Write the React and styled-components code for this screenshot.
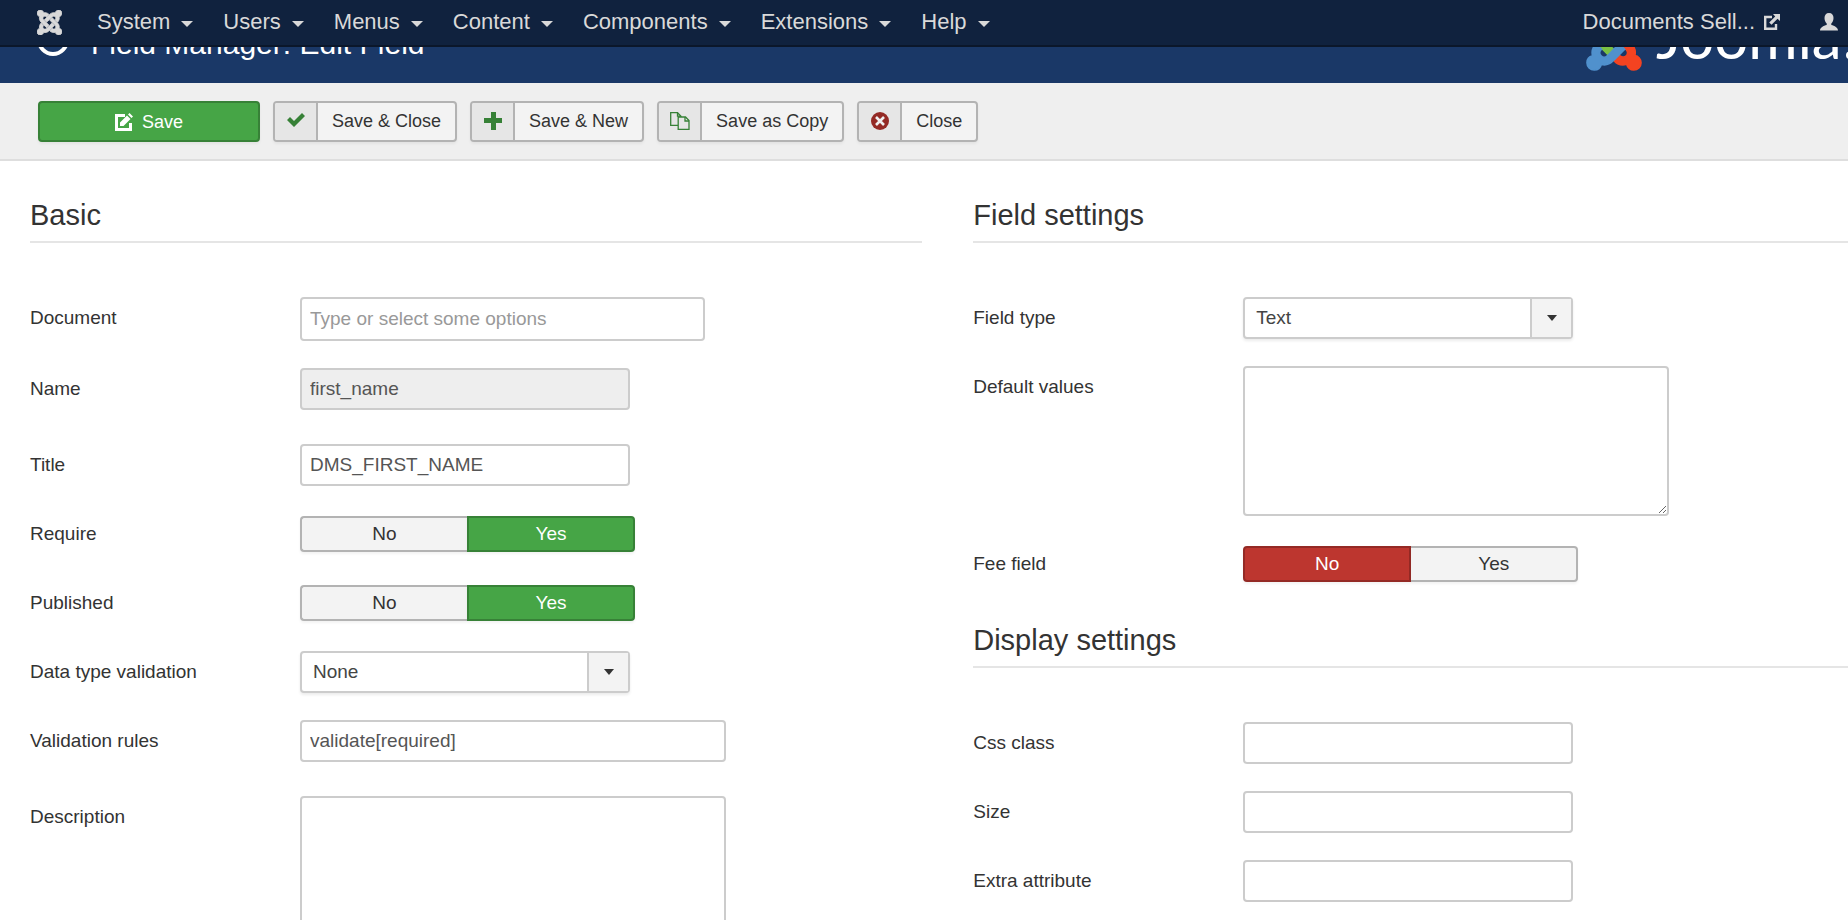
import styled, { createGlobalStyle } from 'styled-components'

const GlobalStyle = createGlobalStyle`
* {
  box-sizing: border-box;
}

body {
  margin: 0;
  overflow: hidden;
  background-color: #fff;
  color: #333;
  font-family: "Liberation Sans", Arial, sans-serif;
  font-size: 19px;
  line-height: 28px;
}

button, input, select, textarea {
  font: inherit;
}
`;

const menus = ['System', 'Users', 'Menus', 'Content', 'Components', 'Extensions', 'Help']

// top left, top right, bottom right, bottom left
const ARMS = [
  'M.6 92.1C.6 58.8 27.4 32 60.4 32c30 0 54.500 21.900 59.200 50.200 32.600-7.600 67.100.6 96.500 30l-44.300 44.300c-20.500-20.500-42.600-16.300-55.400-3.500-14.300 14.300-14.300 37.900 0 52.200l99.500 99.500-44 44.300c-87.700-87.200-49.700-49.700-99.800-99.700-26.800-26.500-35-64.800-24.800-98.900C20.400 144.600.6 120.700.6 92.100z',
  'M130.100 208.500l44.300 44.300c10-10 89.700-89.700 99.700-99.800 14.300-14.300 37.600-14.300 51.900 0 12.800 12.800 17 35-3.500 55.400l44 44.300c31.200-31.200 38.500-67.600 28.900-101.200 29.200-4.100 51.900-29.200 51.900-59.500 0-33.200-26.800-60.100-59.800-60.100-30.300 0-55.400 22.500-59.500 51.600-33.800-9.900-71.700-1.500-98.300 25.100-18.300 19.100-71.100 71.500-99.600 99.900z',
  'M396.400 360.700c8.200-32.700-.9-68.500-26.300-93.900-11.800-12.200 5 4.700-99.500-99.700l-44.300 44.300 99.700 99.700c14.300 14.300 14.300 37.600 0 51.900-12.800 12.800-35 17-55.400-3.500l-44 44.300c27.600 30.200 68 38.800 102.700 28 5.500 27.400 29.700 48.100 58.900 48.100 33 0 59.800-26.800 59.800-60.100 0-30.200-22.500-55-51.600-59.100z',
  'M312.100 307.600l-44-44.300c-87 86.400-50.400 50.400-99.700 99.800-14.300 14.300-37.600 14.300-51.900 0-13.100-13.400-16.900-35.300 3.200-55.400l-44-44.300c-30.200 30.200-38 65.200-29.500 98.300-26.700 6-46.200 29.900-46.200 58.200C0 453.200 26.800 480 59.800 480c28.600 0 52.500-19.800 58.600-46.700 32.700 8.200 68.500-.6 94.200-26 32.100-32 12.200-12.400 99.500-99.700z',
]

function JoomlaMark({ size, colors }) {
  return (
    <svg width={size} height={size} viewBox="0 32 448 448" aria-hidden="true">
      {ARMS.map((arm, i) => <path key={i} d={arm} fill={colors[i]} stroke={colors[i]} strokeWidth="14" />)}
    </svg>
  )
}

function EditIcon() {
  return (
    <svg width="18" height="18" viewBox="0 0 18 18" aria-hidden="true">
      <path d="M10 2.500H1.500V16.500H15.500V10" fill="none" stroke="#fff" strokeWidth="3" />
      <path d="M5 13V9.500L12 2.500L15.500 6L8.500 13Z M13 1.500L14.500 0L18 3.500L16.500 5Z" fill="#fff" />
    </svg>
  )
}

function CheckIcon() {
  return (
    <svg width="18" height="18" viewBox="0 0 18 18" aria-hidden="true">
      <path d="M0 8L3 5L7 9L15 1L18 4L7 15Z" fill="#378137" />
    </svg>
  )
}

function PlusIcon() {
  return (
    <svg width="18" height="18" viewBox="0 0 18 18" aria-hidden="true">
      <path d="M7 0H12V6H18V11H12V18H7V11H0V6H7Z" fill="#378137" />
    </svg>
  )
}

function CopyIcon() {
  return (
    <svg width="20" height="18" viewBox="0 0 20 18" aria-hidden="true">
      <g fill="none" stroke="#378137" strokeWidth="1.300">
        <path d="M8 13.300H0.700V0.700H7.500L11 4.200V5" />
        <path d="M7.500 0.700V4.200H11" />
        <path d="M8.200 5H15.500L19 8.500V17.300H8.200Z" />
        <path d="M15 5V9H19" />
      </g>
    </svg>
  )
}

function CancelIcon() {
  return (
    <svg width="18" height="18" viewBox="0 0 18 18" aria-hidden="true">
      <circle cx="9" cy="9" r="9" fill="#942a25" />
      <path d="M5 5L13 13M13 5L5 13" stroke="#f0f0f0" strokeWidth="2.600" />
    </svg>
  )
}

function ExternalIcon() {
  return (
    <svg width="16" height="16" viewBox="0 0 16 16" aria-hidden="true">
      <path d="M8 3H1.200V14.800H12V10" fill="none" stroke="#d9d9d9" strokeWidth="2.400" />
      <path d="M9 0H16V7L13.500 4.800L7.500 10.800L5.200 8.500L11.200 2.500Z" fill="#d9d9d9" />
    </svg>
  )
}

function UserIcon() {
  return (
    <svg width="18" height="18" viewBox="0 0 18 18" aria-hidden="true">
      <path d="M9 0C12 0 13.500 2 13.500 5C13.500 7.500 12.500 9.500 11.300 10.500V12C14.500 12.800 18 14.500 18 17.500H0C0 14.500 3.500 12.800 6.700 12V10.500C5.500 9.500 4.500 7.500 4.500 5C4.500 2 6 0 9 0Z" fill="#d9d9d9" />
    </svg>
  )
}

function Switch({ label, name, value, color, gap }) {
  return (
    <Row as="fieldset" $gap={gap}>
      <Legend>{label}</Legend>
      <SwitchGroup>
        {['No', 'Yes'].map((option) => (
          <SwitchOption key={option} $color={color}>
            <input type="radio" name={name} defaultChecked={option === value} />
            <span>{option}</span>
          </SwitchOption>
        ))}
      </SwitchGroup>
    </Row>
  )
}

function SelectField({ label, id, options }) {
  return (
    <Row>
      <Label htmlFor={id}>{label}</Label>
      <SelectWrap>
        <Select id={id}>
          {options.map((option) => <option key={option}>{option}</option>)}
        </Select>
        <SelectArrow><Caret /></SelectArrow>
      </SelectWrap>
    </Row>
  )
}

function TextField({ label, id, gap, ...rest }) {
  return (
    <Row $gap={gap}>
      <Label htmlFor={id}>{label}</Label>
      <Input id={id} type="text" {...rest} />
    </Row>
  )
}

function App() {
  return (
    <>
      <GlobalStyle />
      <Navbar>
        <Brand href="#" aria-label="Home"><JoomlaMark size={25} colors={['#d9d9d9', '#d9d9d9', '#d9d9d9', '#d9d9d9']} /></Brand>
        <Menu>
          {menus.map((item) => (
            <NavLink href="#" key={item}>{item}<NavCaret /></NavLink>
          ))}
        </Menu>
        <SiteLink href="#">Documents Sell... <ExternalIcon /></SiteLink>
        <NavLink href="#" aria-label="User"><UserIcon /></NavLink>
      </Navbar>

      <Header>
        <TitleIcon width="32" height="32" viewBox="0 0 32 32" aria-hidden="true">
          <circle cx="16" cy="16" r="14" fill="none" stroke="#fff" strokeWidth="4" />
        </TitleIcon>
        <PageTitle>Field Manager: Edit Field</PageTitle>
        <Logo>
          <JoomlaMark size={54} colors={['#7ac143', '#f9a541', '#f44321', '#5091cd']} />
          <LogoText>Joomla!</LogoText>
        </Logo>
      </Header>

      <Toolbar>
        <SaveButton type="button"><EditIcon />Save</SaveButton>
        <ToolButton type="button"><ToolIcon><CheckIcon /></ToolIcon><ToolText>Save &amp; Close</ToolText></ToolButton>
        <ToolButton type="button"><ToolIcon><PlusIcon /></ToolIcon><ToolText>Save &amp; New</ToolText></ToolButton>
        <ToolButton type="button"><ToolIcon><CopyIcon /></ToolIcon><ToolText>Save as Copy</ToolText></ToolButton>
        <ToolButton type="button"><ToolIcon><CancelIcon /></ToolIcon><ToolText>Close</ToolText></ToolButton>
      </Toolbar>

      <Content>
        <Column>
          <Heading>Basic</Heading>
          <TextField label="Document" id="document" placeholder="Type or select some options" $size="medium" />
          <TextField label="Name" id="name" defaultValue="first_name" readOnly gap={34} />
          <TextField label="Title" id="title" defaultValue="DMS_FIRST_NAME" gap={30} />
          <Switch label="Require" name="require" value="Yes" color="green" gap={33} />
          <Switch label="Published" name="published" value="Yes" color="green" gap={30} />
          <SelectField label="Data type validation" id="datatype" options={['None']} />
          <TextField label="Validation rules" id="rules" defaultValue="validate[required]" $size="large" gap={34} />
          <Row>
            <Label htmlFor="description">Description</Label>
            <TextArea id="description" />
          </Row>
        </Column>

        <Column>
          <Heading>Field settings</Heading>
          <SelectField label="Field type" id="fieldtype" options={['Text']} />
          <Row $gap={30}>
            <Label htmlFor="defaults">Default values</Label>
            <TextArea id="defaults" />
          </Row>
          <Switch label="Fee field" name="fee" value="No" color="red" gap={40} />
          <Heading>Display settings</Heading>
          <TextField label="Css class" id="cssclass" />
          <TextField label="Size" id="size" />
          <TextField label="Extra attribute" id="extra" />
        </Column>
      </Content>
    </>
  )
}

export default App

const Navbar = styled.nav`
  position: relative;
  z-index: 1;
  display: flex;
  align-items: center;
  height: 47px;
  padding: 0 10px 1px 37px;
  background-color: #10223e;
  border-bottom: 2px solid #0b172a;
  font-size: 22px;
`;

const Brand = styled.a`
  display: flex;
  margin-right: 35px;
`;

const Menu = styled.div`
  display: flex;
  flex: 1;
  gap: 30px;
`;

const NavLink = styled.a`
  display: flex;
  align-items: center;
  gap: 11px;
  color: #d9d9d9;
  text-decoration: none;
`;

const Caret = styled.span`
  width: 0;
  height: 0;
  border-top: 6px solid #333;
  border-left: 5px solid transparent;
  border-right: 5px solid transparent;
`;

const NavCaret = styled(Caret)`
  margin-top: 4px;
  border-top-color: #d9d9d9;
  border-left-width: 6px;
  border-right-width: 6px;
`;

const SiteLink = styled(NavLink)`
  gap: 9px;
  margin-right: 40px;
`;

const Header = styled.header`
  display: flex;
  align-items: flex-end;
  height: 36px;
  padding-left: 37px;
  overflow: hidden;
  background-color: #1a3867;
  color: #fff;
`;

const TitleIcon = styled.svg`
  margin: 0 22px 27px 0;
`;

const PageTitle = styled.h1`
  flex: 1;
  margin: 0 0 21px;
  font-size: 30px;
  font-weight: 400;
  line-height: 36px;
`;

const Logo = styled.div`
  display: flex;
  align-items: flex-end;
  flex: none;
  width: 261px;
  padding-bottom: 13px;

  svg {
    overflow: visible;
  }
`;

const LogoText = styled.span`
  margin-left: 15px;
  font-family: Lato, sans-serif;
  font-size: 60px;
  line-height: 68px;
`;

const Toolbar = styled.div`
  display: flex;
  gap: 13px;
  padding: 18px 38px 17px;
  background-color: #efefef;
  border-bottom: 2px solid #dedede;
  font-size: 18px;
`;

const SaveButton = styled.button`
  display: flex;
  align-items: center;
  justify-content: center;
  gap: 9px;
  width: 222px;
  height: 41px;
  padding: 0;
  border: 2px solid #378137;
  border-radius: 4px;
  background-color: #46a546;
  box-shadow: 0 2px 3px rgba(0, 0, 0, 0.05);
  color: #fff;
`;

const ToolButton = styled.button`
  display: flex;
  height: 41px;
  padding: 0;
  overflow: hidden;
  border: 2px solid #b3b3b3;
  border-radius: 4px;
  background-color: #f3f3f3;
  box-shadow: 0 2px 3px rgba(0, 0, 0, 0.05);
  color: #333;
`;

const ToolIcon = styled.span`
  display: flex;
  align-items: center;
  justify-content: center;
  width: 43px;
  height: 37px;
  padding-bottom: 2px;
  border-right: 2px solid #b3b3b3;
  background-color: #e6e6e6;
`;

const ToolText = styled.span`
  padding: 0 14px;
  line-height: 37px;
`;

const Content = styled.main`
  display: grid;
  grid-template-columns: 51fr 50fr;
  column-gap: 51px;
  padding: 36px 0 0 30px;
`;

const Column = styled.section`
  min-width: 0;
`;

const Heading = styled.h3`
  margin: 0 0 54px;
  padding-bottom: 8px;
  border-bottom: 2px solid #e5e5e5;
  font-size: 29px;
  font-weight: 400;
  line-height: 36px;
`;

const Row = styled.div`
  display: flex;
  align-items: flex-start;
  min-width: 0;
  margin: 0 0 ${(props) => props.$gap || 27}px;
  padding: 0;
  border: 0;
`;

const Label = styled.label`
  width: 270px;
  flex: none;
  padding-top: 7px;
`;

const Legend = styled.legend`
  float: left;
  width: 270px;
  padding: 4px 0 0;
`;

const widths = { small: '330px', medium: '405px', large: '426px' }

const Input = styled.input`
  width: ${(props) => widths[props.$size || 'small']};
  height: ${(props) => (props.$size === 'medium' ? '44px' : '42px')};
  padding: 0 8px;
  border: 2px solid #ccc;
  border-radius: 4px;
  background-color: #fff;
  color: #555;

  &:read-only {
    background-color: #eee;
  }

  &::placeholder {
    color: #999;
  }
`;

const TextArea = styled.textarea`
  width: 426px;
  height: 150px;
  padding: 6px 8px;
  border: 2px solid #ccc;
  border-radius: 4px;
`;

const SelectWrap = styled.div`
  position: relative;
  width: 330px;
`;

const Select = styled.select`
  display: block;
  width: 100%;
  height: 42px;
  padding: 0 11px;
  appearance: none;
  border: 2px solid #ccc;
  border-radius: 4px;
  background-color: #fff;
  box-shadow: 0 2px 3px rgba(0, 0, 0, 0.08);
  color: #444;
`;

const SelectArrow = styled.span`
  position: absolute;
  top: 2px;
  right: 2px;
  bottom: 2px;
  display: flex;
  align-items: center;
  justify-content: center;
  width: 41px;
  border-left: 2px solid #ccc;
  background-color: #f3f3f3;
  pointer-events: none;
`;

const colors = {
  green: ['#46a546', '#378137'],
  red: ['#bd362f', '#942a25'],
}

const SwitchGroup = styled.div`
  display: flex;
`;

const SwitchOption = styled.label`
  position: relative;
  width: 167px;
  text-align: center;

  &:has(input:checked) {
    width: 168px;
  }

  input {
    position: absolute;
    inset: 0;
    margin: 0;
    opacity: 0;
  }

  span {
    display: block;
    height: 36px;
    border: 2px solid #b3b3b3;
    border-right-width: 0;
    border-radius: 4px 0 0 4px;
    background-color: #f3f3f3;
    box-shadow: 0 2px 3px rgba(0, 0, 0, 0.05);
    line-height: 32px;
  }

  &:last-child span {
    border-right-width: 2px;
    border-left-width: 0;
    border-radius: 0 4px 4px 0;
  }

  input:checked + span {
    border-width: 2px;
    border-color: ${(props) => colors[props.$color][1]};
    background-color: ${(props) => colors[props.$color][0]};
    color: #fff;
  }
`;
